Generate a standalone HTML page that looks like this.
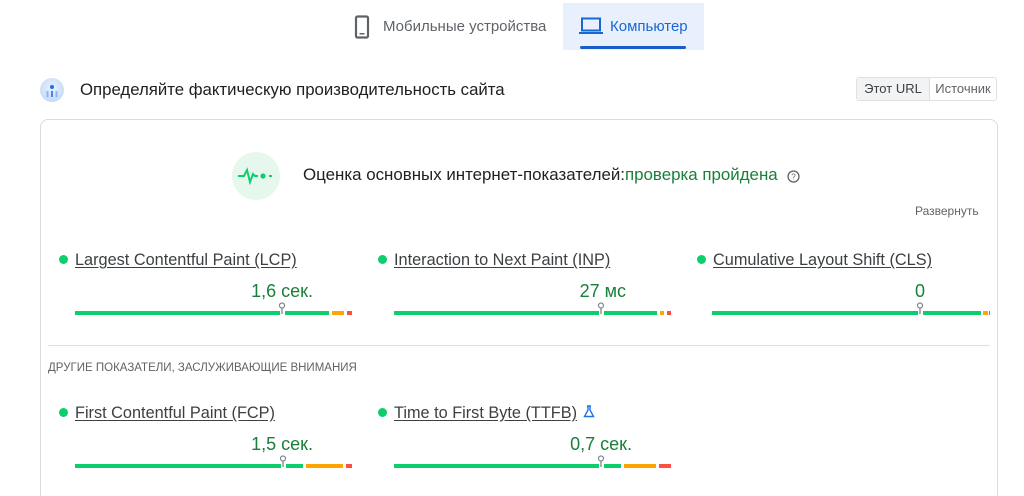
<!DOCTYPE html>
<html style="height:496px;overflow:hidden"><head><meta charset="utf-8"><style>
body{margin:0;width:1024px;height:496px;overflow:hidden;background:#fff;font-family:"Liberation Sans",Arial,sans-serif;position:relative;color:#202124}
.a{position:absolute}
.lbl{font-size:16.3px;color:#3c4043;text-decoration:underline;text-underline-offset:2px;white-space:nowrap}
.dot{width:9px;height:9px;border-radius:50%;background:#0cce6b}
.val{font-size:18px;color:#188038;white-space:nowrap;text-align:right}
.g{background:#0cce6b}.o{background:#ffa400}.r{background:#ff4e42}
.bar{height:4px}
</style></head><body>
<div class="a" style="left:563px;top:3px;width:141px;height:47px;background:#e8f0fe"></div>
<div class="a" style="left:580px;top:46px;width:106px;height:3px;background:#1a5cc8;border-radius:2px"></div>
<svg class="a" style="left:354px;top:15px" width="16" height="24" viewBox="0 0 16 24"><rect x="2" y="1.5" width="12" height="21" rx="1.5" fill="none" stroke="#5f6368" stroke-width="2.2"/><rect x="5.5" y="18" width="5" height="1.5" fill="#5f6368"/></svg>
<div class="a" style="left:383px;top:18px;font-size:15px;color:#5f6368">Мобильные устройства</div>
<svg class="a" style="left:579px;top:17px" width="24" height="18" viewBox="0 0 24 18"><rect x="3" y="1.5" width="18" height="12" fill="none" stroke="#1967d2" stroke-width="2"/><rect x="0" y="15" width="24" height="2" fill="#1967d2"/></svg>
<div class="a" style="left:610px;top:18px;font-size:15px;color:#1967d2">Компьютер</div>
<div class="a" style="left:40px;top:78px;width:24px;height:24px;border-radius:50%;background:radial-gradient(circle at 50% 40%,#e8f0fe,#bcd4f5)"></div>
<svg class="a" style="left:44px;top:82px" width="16" height="16"><circle cx="8" cy="5" r="2" fill="#1a73e8"/><rect x="2.5" y="9" width="2" height="6" fill="#8ab4f8"/><rect x="7" y="9" width="2" height="6" fill="#4285f4"/><rect x="11.5" y="9" width="2" height="6" fill="#8ab4f8"/></svg>
<div class="a" style="left:80px;top:80px;font-size:16.8px;color:#202124">Определяйте фактическую производительность сайта</div>
<div class="a" style="left:856px;top:77px;width:141px;height:24px;border:1px solid #e0e0e0;border-radius:3px;box-sizing:border-box;display:flex;font-size:13px">
<div style="width:72px;background:#f1f3f4;border-right:1px solid #e0e0e0;text-align:center;line-height:22px;color:#3c4043">Этот URL</div>
<div style="flex:1;text-align:center;line-height:22px;color:#5f6368">Источник</div></div>
<div class="a" style="left:40px;top:119px;width:958px;height:377px;border:1px solid #dadce0;border-bottom:none;border-radius:8px 8px 0 0;box-sizing:border-box"></div>
<div class="a" style="left:232px;top:152px;width:48px;height:48px;border-radius:50%;background:#e6f8ee"></div>
<svg class="a" style="left:238px;top:166px" width="36" height="20" viewBox="0 0 36 20"><polyline points="0,10 6,10 9,4 12,16 15,8 17,10 20,10" fill="none" stroke="#0cce6b" stroke-width="2"/><circle cx="25" cy="10" r="2.6" fill="#0cce6b"/><rect x="31" y="9" width="3" height="2" fill="#0cce6b"/></svg>
<div class="a" style="left:303px;top:165px;font-size:16.9px;color:#202124;white-space:nowrap">Оценка основных интернет-показателей:<span style="color:#188038">проверка пройдена</span></div>
<svg class="a" style="left:787px;top:170px" width="13" height="13" viewBox="0 0 13 13"><circle cx="6.5" cy="6.5" r="5.5" fill="none" stroke="#5f6368" stroke-width="1.3"/><text x="6.5" y="9.5" font-size="8" text-anchor="middle" fill="#5f6368" font-family="Liberation Sans">?</text></svg>
<div class="a" style="left:915px;top:204px;font-size:12px;color:#5f6368">Развернуть</div>

<div class="a dot" style="left:59px;top:255px"></div>
<div class="a lbl" style="left:75px;top:251px">Largest Contentful Paint (LCP)</div>
<div class="a val" style="right:711px;top:281px">1,6 сек.</div>
<div class="a bar g" style="left:75px;top:311px;width:205px"></div>
<div class="a bar g" style="left:285px;top:311px;width:44px"></div>
<div class="a bar o" style="left:332px;top:311px;width:12px"></div>
<div class="a bar r" style="left:347px;top:311px;width:5px"></div>
<svg class="a" style="left:278px;top:302px" width="8" height="12"><circle cx="4" cy="3.5" r="2.5" fill="#fff" stroke="#80868b" stroke-width="1.2"/><line x1="4" y1="6" x2="4" y2="12" stroke="#80868b" stroke-width="1.3"/></svg>

<div class="a dot" style="left:378px;top:255px"></div>
<div class="a lbl" style="left:394px;top:251px">Interaction to Next Paint (INP)</div>
<div class="a val" style="right:398px;top:281px">27 мс</div>
<div class="a bar g" style="left:394px;top:311px;width:205px"></div>
<div class="a bar g" style="left:604px;top:311px;width:53px"></div>
<div class="a bar o" style="left:660px;top:311px;width:4px"></div>
<div class="a bar r" style="left:667px;top:311px;width:4px"></div>
<svg class="a" style="left:597px;top:302px" width="8" height="12"><circle cx="4" cy="3.5" r="2.5" fill="#fff" stroke="#80868b" stroke-width="1.2"/><line x1="4" y1="6" x2="4" y2="12" stroke="#80868b" stroke-width="1.3"/></svg>

<div class="a dot" style="left:697px;top:255px"></div>
<div class="a lbl" style="left:713px;top:251px">Cumulative Layout Shift (CLS)</div>
<div class="a val" style="right:99px;top:281px">0</div>
<div class="a bar g" style="left:712px;top:311px;width:206px"></div>
<div class="a bar g" style="left:923px;top:311px;width:58px"></div>
<div class="a bar o" style="left:983px;top:311px;width:5px"></div>
<div class="a bar r" style="left:989px;top:311px;width:1px"></div>
<svg class="a" style="left:916px;top:302px" width="8" height="12"><circle cx="4" cy="3.5" r="2.5" fill="#fff" stroke="#80868b" stroke-width="1.2"/><line x1="4" y1="6" x2="4" y2="12" stroke="#80868b" stroke-width="1.3"/></svg>

<div class="a" style="left:48px;top:345px;width:942px;height:1px;background:#e0e0e0"></div>
<div class="a" style="left:48px;top:362px;font-size:11.5px;color:#5f6368">ДРУГИЕ ПОКАЗАТЕЛИ, ЗАСЛУЖИВАЮЩИЕ ВНИМАНИЯ</div>

<div class="a dot" style="left:59px;top:408px"></div>
<div class="a lbl" style="left:75px;top:404px">First Contentful Paint (FCP)</div>
<div class="a val" style="right:711px;top:434px">1,5 сек.</div>
<div class="a bar g" style="left:75px;top:464px;width:206px"></div>
<div class="a bar g" style="left:286px;top:464px;width:17px"></div>
<div class="a bar o" style="left:306px;top:464px;width:37px"></div>
<div class="a bar r" style="left:346px;top:464px;width:6px"></div>
<svg class="a" style="left:279px;top:455px" width="8" height="12"><circle cx="4" cy="3.5" r="2.5" fill="#fff" stroke="#80868b" stroke-width="1.2"/><line x1="4" y1="6" x2="4" y2="12" stroke="#80868b" stroke-width="1.3"/></svg>

<div class="a dot" style="left:378px;top:408px"></div>
<div class="a lbl" style="left:394px;top:404px">Time to First Byte (TTFB)</div>
<svg class="a" style="left:583px;top:405px" width="12" height="13" viewBox="0 0 12 13"><path d="M4 1h4M5 1v4L1.5 11.5h9L7 5V1" fill="none" stroke="#1a73e8" stroke-width="1.4"/></svg>
<div class="a val" style="right:392px;top:434px">0,7 сек.</div>
<div class="a bar g" style="left:394px;top:464px;width:205px"></div>
<div class="a bar g" style="left:604px;top:464px;width:17px"></div>
<div class="a bar o" style="left:624px;top:464px;width:32px"></div>
<div class="a bar r" style="left:659px;top:464px;width:12px"></div>
<svg class="a" style="left:597px;top:455px" width="8" height="12"><circle cx="4" cy="3.5" r="2.5" fill="#fff" stroke="#80868b" stroke-width="1.2"/><line x1="4" y1="6" x2="4" y2="12" stroke="#80868b" stroke-width="1.3"/></svg>
</body></html>
